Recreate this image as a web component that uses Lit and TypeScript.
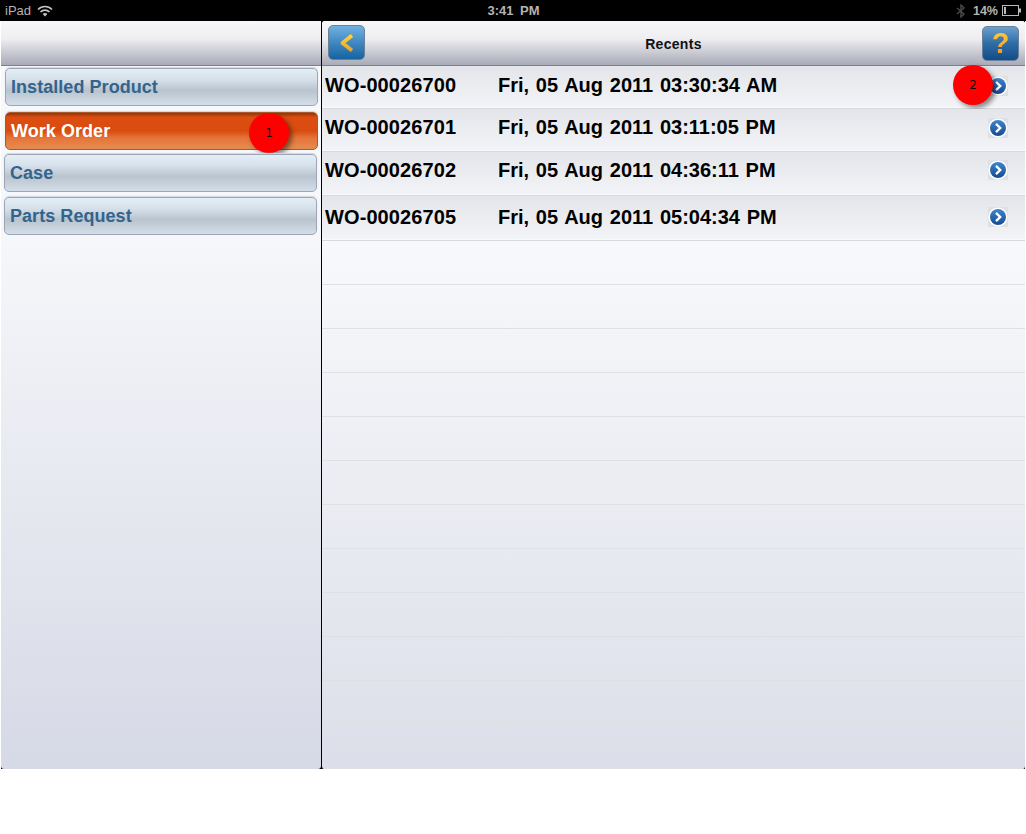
import { LitElement, html, css } from "lit";
import { customElement } from "lit/decorators.js";

const recents = [
  { id: "WO-00026700", date: "Fri, 05 Aug 2011 03:30:34 AM", h: 43, pb: 3 },
  { id: "WO-00026701", date: "Fri, 05 Aug 2011 03:11:05 PM", h: 43, pb: 5 },
  { id: "WO-00026702", date: "Fri, 05 Aug 2011 04:36:11 PM", h: 44, pb: 7 },
  { id: "WO-00026705", date: "Fri, 05 Aug 2011 05:04:34 PM", h: 45, pb: 2 },
];
const menu = [
  { t: "Installed Product", cls: "m1" },
  { t: "Work Order", cls: "m2 active" },
  { t: "Case", cls: "m3" },
  { t: "Parts Request", cls: "m4" },
];

const disclosure = (i: number) => html`<svg class="disc" width="20" height="20" viewBox="0 0 20 20">
  <defs><linearGradient id="dg${i}" x1="0" y1="0" x2="0" y2="1"><stop offset="0" stop-color="#3f86cc"/><stop offset="1" stop-color="#164a8f"/></linearGradient></defs>
  <rect width="20" height="20" fill="#dfe0e6"/>
  <circle cx="10" cy="10" r="9.6" fill="#fff"/><circle cx="10" cy="10" r="8" fill="url(#dg${i})"/>
  <path d="M8 5.8 L12.2 10 L8 14.2" fill="none" stroke="#fff" stroke-width="2.4"/>
</svg>`;

@customElement("app-root")
export class AppRoot extends LitElement {
  static styles = css`
    :host { display: block; width: 1026px; height: 834px; background: #fff; font-family: "Liberation Sans", Arial, sans-serif; overflow: hidden; }
    .screen { width: 1026px; height: 769px; display: flex; flex-direction: column; background: #000; }
    .status { height: 21px; flex: none; display: grid; grid-template-columns: 1fr auto 1fr; align-items: center; color: #b4b4b4; font-size: 13px; padding: 0 4px 0 5px; box-sizing: border-box; }
    .status .left, .status .right { display: flex; align-items: center; gap: 6px; }
    .status .right { justify-content: flex-end; gap: 7px; font-weight: bold; font-size: 12.5px; }
    .status .right span { margin-right: -3px; }
    .status .time { font-weight: bold; font-size: 13px; word-spacing: 3px; }
    .main { flex: 1; display: flex; min-height: 0; padding: 0 1px; background: linear-gradient(to right, #fff 1px, #000 1px, #000 1025px, #fff 1025px); }
    .side { width: 320px; flex: none; background: linear-gradient(#f8f9fb 0%, #f6f7fa 29%, #d6d9e6 100%); border-radius: 3px; display: flex; flex-direction: column; }
    .content { width: 703px; flex: none; margin-left: 1px; background: linear-gradient(#f8f9fb 0%, #f8f9fb 29%, #dcdfe9 100%); border-radius: 3px; display: flex; flex-direction: column; overflow: hidden; position: relative; }
    .bar { height: 44px; flex: none; border-bottom: 1px solid #79808f; background: linear-gradient(#f8f8fa 0%, #eeeef2 40%, #a8aab6 100%); display: flex; align-items: center; justify-content: space-between; position: relative; padding: 0 6px; }
    .bar .title { position: absolute; left: 0; right: 0; top: 15px; text-align: center; font-weight: bold; font-size: 14px; letter-spacing: .3px; color: #111; }
    .tbtn { width: 37px; height: 35px; border-radius: 5px; border: 1px solid #6a7f98; box-sizing: border-box; display: flex; align-items: center; justify-content: center; }
    .back { background: linear-gradient(#70b1e1 0%, #4288c2 50%, #15639f 100%); margin-top: -1px; }
    .helpbtn { background: linear-gradient(#6a9fce 0%, #2f6ca6 50%, #134c88 100%); }
    .help { font-size: 29px; font-weight: bold; line-height: 1; background: linear-gradient(#ffcf3a, #f58f1e); -webkit-background-clip: text; background-clip: text; color: transparent; }
    .menu { display: flex; flex-direction: column; }
    .item { height: 38px; box-sizing: border-box; border-radius: 5px; border: 1px solid #9ea5b6; font-size: 18px; letter-spacing: .05px; font-weight: bold; color: #33648d; display: flex; align-items: center; padding-left: 5px; background: linear-gradient(#e4eef6 0%, #d5e0ea 30%, #b9c4ce 60%, #d4dee8 100%); box-shadow: 0 -1px 1px #d4d6e0; position: relative; }
    .m1 { margin: 2px 3px 0 4px; }
    .m2 { margin: 6px 3px 0 4px; }
    .m3 { margin: 4px 4px 0 3px; }
    .m4 { margin: 5px 4px 0 3px; }
    .active { color: #fff; border-color: #a75a2c; background: linear-gradient(#93340b 0%, #dc4d10 12%, #d94c10 50%, #e5753a 70%, #e68c50 100%); }
    .badge { position: absolute; width: 40px; height: 40px; border-radius: 50%; background: #fe0000; color: #111; font: 12px "DejaVu Sans", sans-serif; display: flex; align-items: center; justify-content: center; box-shadow: 3px 3px 5px rgba(0,0,0,.45); letter-spacing: 0; }
    .b1 { left: 243px; top: 0; }
    .b2 { right: 32px; top: -1px; }
    .rows { display: flex; flex-direction: column; position: relative; }
    .rows::before { content: ""; position: absolute; left: 0; top: 0; width: 3px; height: 3px; background: #000; clip-path: polygon(0 0, 100% 0, 0 100%); }
    .row { display: flex; align-items: center; box-sizing: border-box; position: relative; border-bottom: 1px solid #d8d9de; box-shadow: inset 0 -1px 0 #f9f9fb; font-weight: bold; font-size: 20px; color: #000; padding-left: 3px; padding-right: 17px; background: linear-gradient(#e4e5ea, #f3f4f7); }
    .row .id { width: 173px; flex: none; letter-spacing: .1px; }
    .row .date { flex: 1; word-spacing: 1.2px; }
    .disc { flex: none; }
    .blank { height: 44px; flex: none; border-bottom: 1px solid #e0e0e4; box-sizing: border-box; }
  `;

  render() {
    return html`<div class="screen">
      <div class="status">
        <div class="left"><span>iPad</span>
          <svg width="16" height="12" viewBox="0 0 16 12"><path d="M1 4.5 C5 .5 11 .5 15 4.5 M3.5 7 C6 4.6 10 4.6 12.5 7" fill="none" stroke="#c4c4c4" stroke-width="1.7"/><path d="M5.6 9 C7 7.8 9 7.8 10.4 9 L8 11.5 Z" fill="#c4c4c4"/></svg>
        </div>
        <div class="time">3:41 PM</div>
        <div class="right">
          <svg width="10" height="14" viewBox="0 0 10 14"><path d="M1 4 L8 10 L5 13 V1 L8 4 L1 10" fill="none" stroke="#4a4a4a" stroke-width="1.4"/></svg>
          <span>14%</span>
          <svg width="20" height="11" viewBox="0 0 20 11"><rect x=".5" y=".5" width="16" height="10" fill="none" stroke="#b9b9b9"/><rect x="2" y="2" width="2" height="7" fill="#b9b9b9"/><rect x="17" y="3.5" width="2" height="4" fill="#b9b9b9"/></svg>
        </div>
      </div>
      <div class="main">
        <div class="side">
          <div class="bar"></div>
          <div class="menu">
            ${menu.map((m) => html`<div class="item ${m.cls}">${m.t}${m.t === "Work Order" ? html`<div class="badge b1">1</div>` : ""}</div>`)}
          </div>
        </div>
        <div class="content">
          <div class="bar">
            <div class="tbtn back">
              <svg width="22" height="22" viewBox="0 0 22 22"><defs><linearGradient id="cg" gradientUnits="userSpaceOnUse" x1="0" y1="2" x2="0" y2="20"><stop offset="0" stop-color="#ffd83f"/><stop offset="1" stop-color="#f19f22"/></linearGradient></defs><path d="M16 3.5 L6.5 11 L16 18.5" fill="none" stroke="url(#cg)" stroke-width="3.8" stroke-linejoin="round"/></svg>
            </div>
            <div class="title">Recents</div>
            <div class="tbtn helpbtn"><span class="help">?</span></div>
          </div>
          <div class="rows">
            ${recents.map((r, i) => html`<div class="row" style="height:${r.h}px;padding-bottom:${r.pb}px">
              <span class="id">${r.id}</span><span class="date">${r.date}</span>
              ${disclosure(i)}
              ${i === 0 ? html`<div class="badge b2">2</div>` : ""}
            </div>`)}
          </div>
          ${Array.from({ length: 12 }).map(() => html`<div class="blank"></div>`)}
        </div>
      </div>
    </div>`;
  }
}
